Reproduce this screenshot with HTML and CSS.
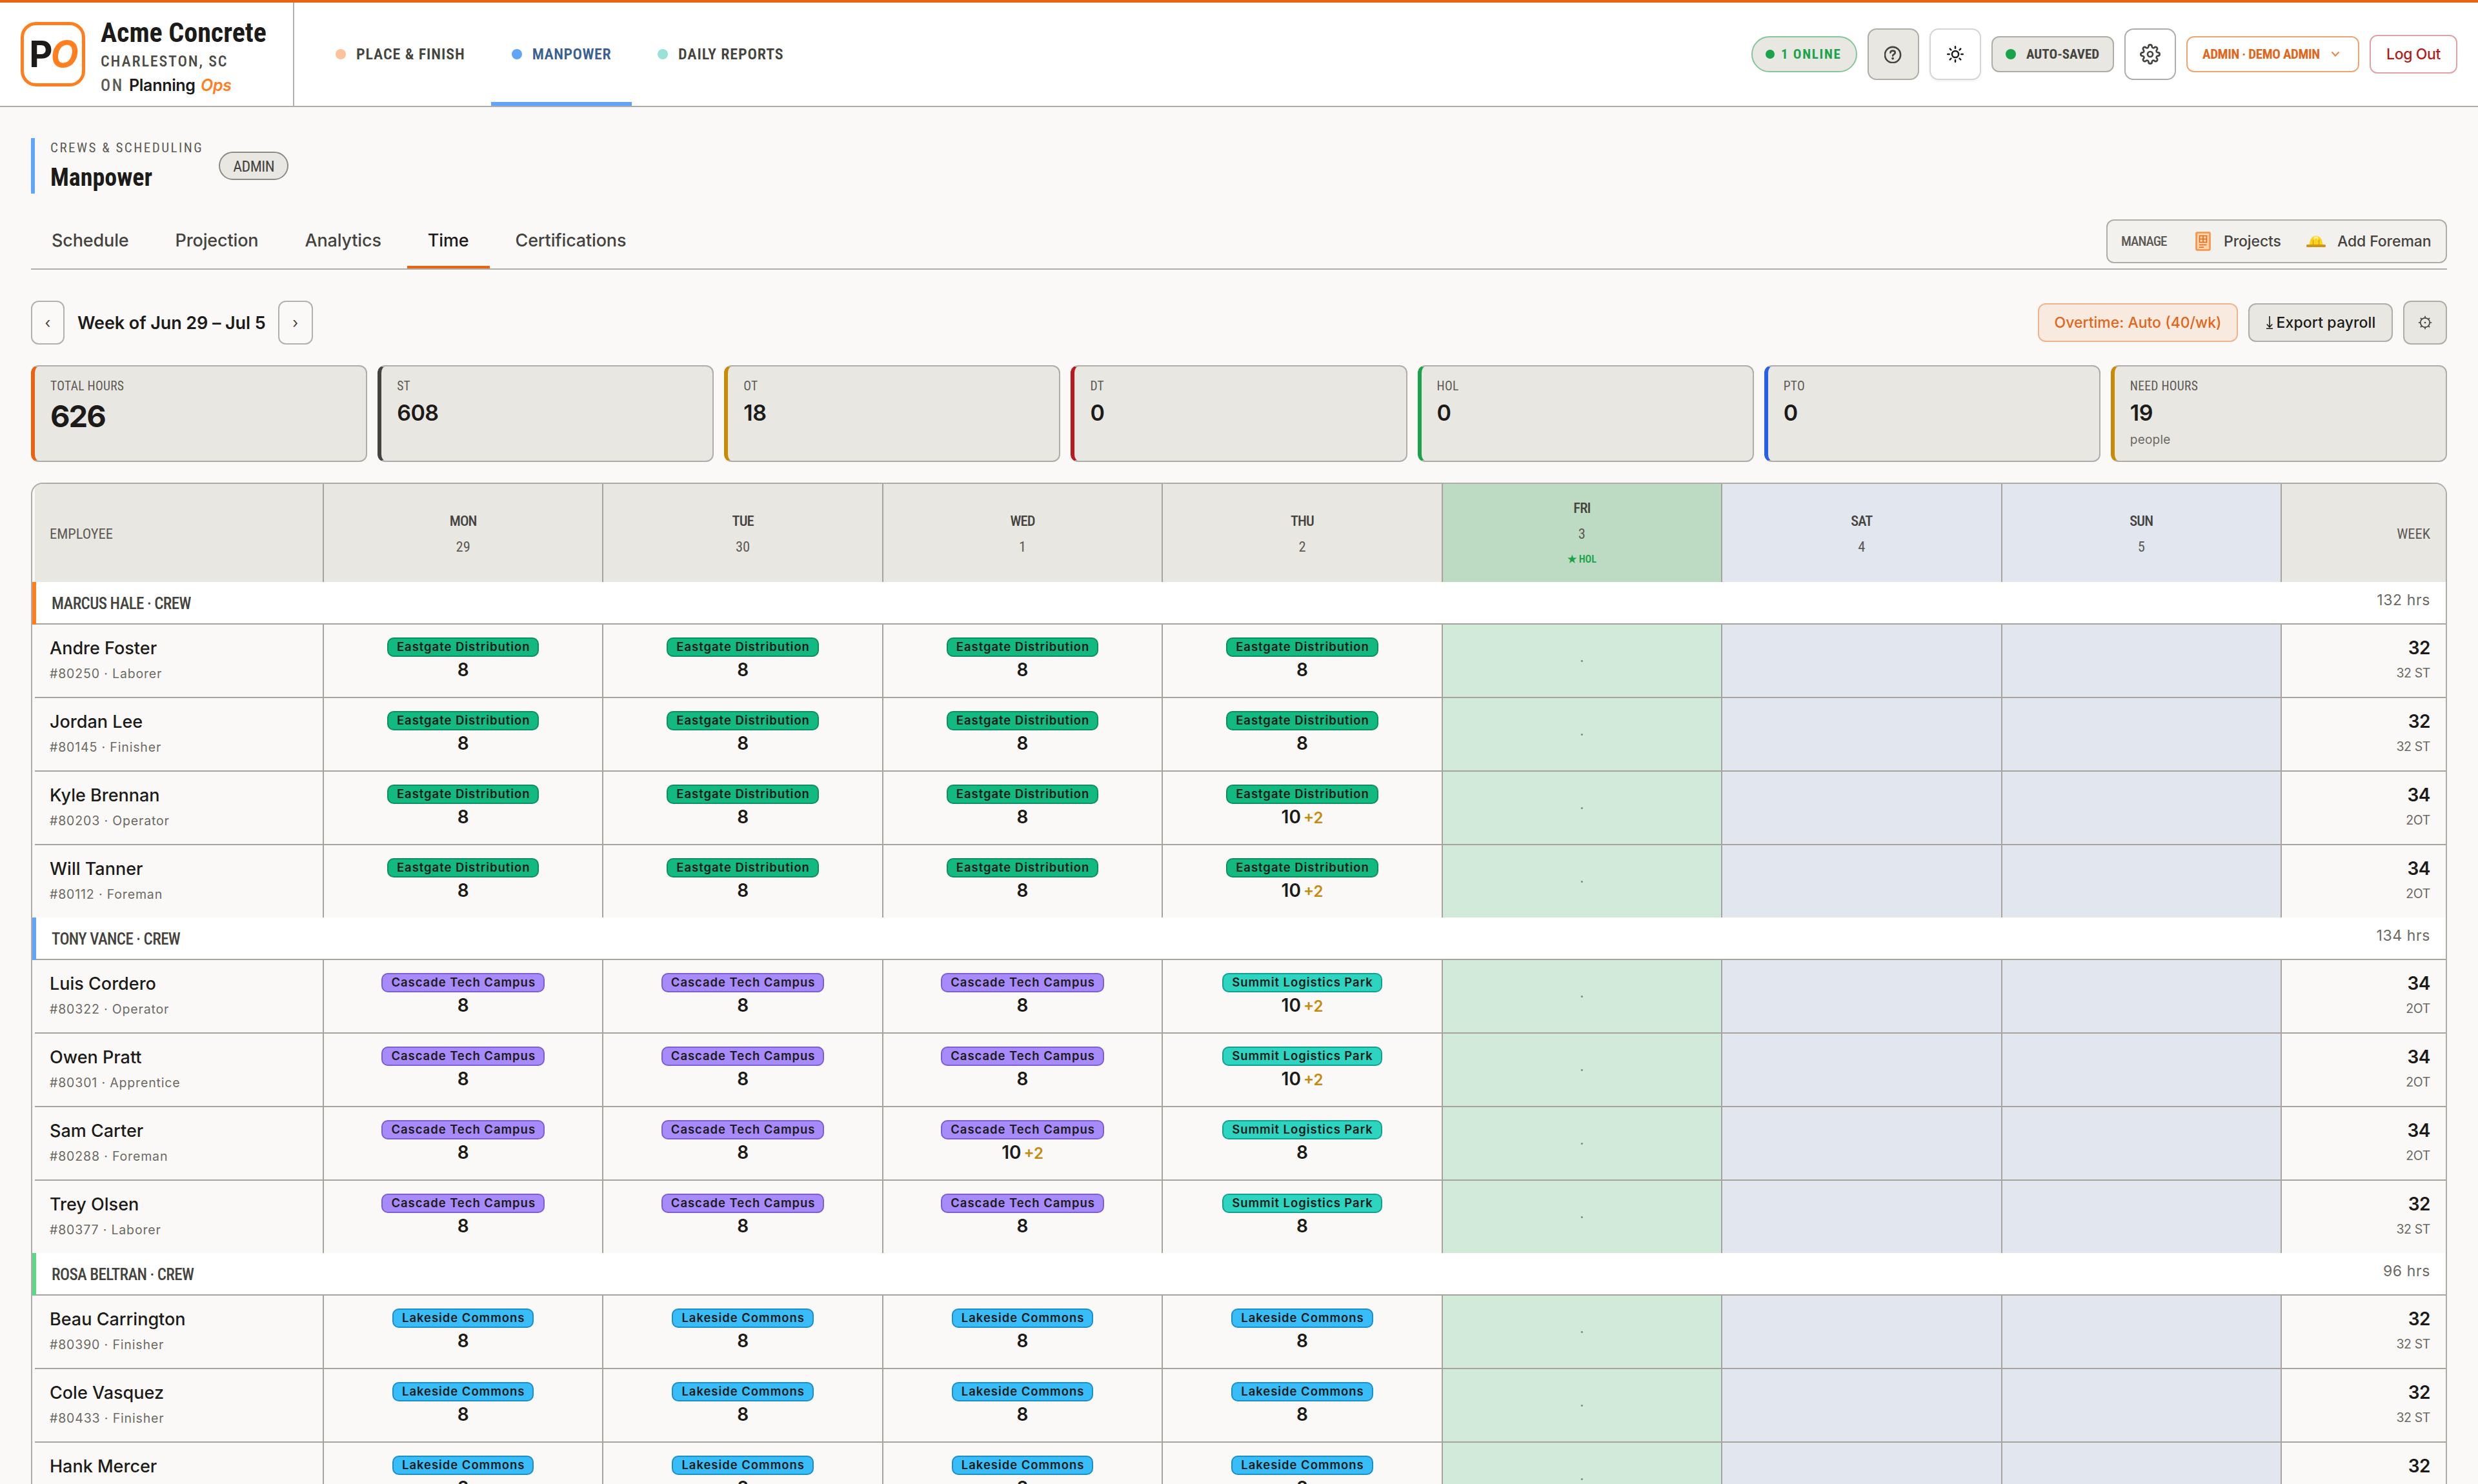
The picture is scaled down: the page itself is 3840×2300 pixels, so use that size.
FILE: index.html
```
<!DOCTYPE html>
<html lang="en">
<head>
    <meta charset="UTF-8">
    <meta name="viewport" content="width=device-width, initial-scale=1.0">
    <title>Manpower - Time</title>
    <link rel="stylesheet" href="styles.css">
</head>
<body>
    <header class="topbar">
        <div class="brand">
            <div class="logo">P<i>O</i></div>
            <div class="brand-text">
                <div class="brand-name">Acme Concrete</div>
                <div class="brand-city">CHARLESTON, SC</div>
                <div class="brand-on">ON <span class="plan">Planning</span> <i>Ops</i></div>
            </div>
        </div>
        <nav class="modules">
            <a class="module"><span class="dot peach"></span><span>PLACE &amp; FINISH</span></a>
            <a class="module active"><span class="dot blue"></span><span>MANPOWER</span></a>
            <a class="module"><span class="dot mint"></span><span>DAILY REPORTS</span></a>
        </nav>
        <div class="actions">
            <div class="online"><span class="dot"></span><span>1 ONLINE</span></div>
            <button class="icon-btn grey">
                <svg width="28" height="28" viewBox="0 0 28 28" fill="none" stroke="#44433e" stroke-width="2.6" stroke-linecap="round"><circle cx="13" cy="15" r="12.1"/><path d="M9.4 11.6c.2-1.9 1.7-3 3.7-3s3.7 1.2 3.7 3.1c0 2.4-3.5 2.500-3.700 4.800"/><circle cx="13.1" cy="20.6" r="1.9" fill="#44433e" stroke="none"/></svg>
            </button>
            <button class="icon-btn soft">
                <svg width="28" height="28" viewBox="0 0 28 28" fill="none" stroke="#1c1b19" stroke-width="2.5" stroke-linecap="round"><circle cx="14" cy="14" r="5.1"/><path d="M14 2.3v2.4M14 23.3v2.4M2.3 14h2.4M23.3 14h2.4M5.7 5.7l1.7 1.7M20.6 20.6l1.7 1.7M5.7 22.3l1.7-1.7M20.6 7.4l1.7-1.7"/></svg>
            </button>
            <div class="saved"><span class="dot"></span><span>AUTO-SAVED</span></div>
            <button class="icon-btn">
                <svg width="32" height="32" viewBox="0 0 24 24" fill="none" stroke="#44433e" stroke-width="2" stroke-linecap="round" stroke-linejoin="round"><circle cx="12" cy="12" r="3"/><path d="M19.4 15a1.65 1.65 0 0 0 .33 1.82l.06.06a2 2 0 0 1 0 2.83 2 2 0 0 1-2.83 0l-.06-.06a1.65 1.65 0 0 0-1.82-.33 1.65 1.65 0 0 0-1 1.51V21a2 2 0 0 1-2 2 2 2 0 0 1-2-2v-.09A1.65 1.65 0 0 0 9 19.4a1.65 1.65 0 0 0-1.82.33l-.06.06a2 2 0 0 1-2.83 0 2 2 0 0 1 0-2.83l.06-.06a1.65 1.65 0 0 0 .33-1.82 1.65 1.65 0 0 0-1.51-1H3a2 2 0 0 1-2-2 2 2 0 0 1 2-2h.09A1.65 1.65 0 0 0 4.6 9a1.65 1.65 0 0 0-.33-1.82l-.06-.06a2 2 0 0 1 0-2.83 2 2 0 0 1 2.83 0l.06.06a1.65 1.65 0 0 0 1.82.33H9a1.65 1.65 0 0 0 1-1.51V3a2 2 0 0 1 2-2 2 2 0 0 1 2 2v.09a1.65 1.65 0 0 0 1 1.51 1.65 1.65 0 0 0 1.82-.33l.06-.06a2 2 0 0 1 2.83 0 2 2 0 0 1 0 2.83l-.06.06a1.65 1.65 0 0 0-.33 1.82V9a1.65 1.65 0 0 0 1.51 1H21a2 2 0 0 1 2 2 2 2 0 0 1-2 2h-.09a1.65 1.65 0 0 0-1.51 1z"/></svg>
            </button>
            <button class="role"><span>ADMIN · DEMO ADMIN</span>
                <svg width="14" height="10" viewBox="0 0 14 10" fill="none" stroke="#e8873f" stroke-width="2"><path d="M1.5 1.5l5.5 6 5.500-6"/></svg>
            </button>
            <button class="logout">Log Out</button>
        </div>
    </header>

    <main class="page">
        <div class="page-head">
            <div class="page-title">
                <div class="eyebrow">CREWS &amp; SCHEDULING</div>
                <h1>Manpower</h1>
            </div>
            <span class="badge">ADMIN</span>
        </div>

        <div class="tabs-row">
            <nav class="tabs">
                <a class="tab">Schedule</a>
                <a class="tab">Projection</a>
                <a class="tab">Analytics</a>
                <a class="tab active">Time</a>
                <a class="tab">Certifications</a>
            </nav>
            <div class="manage">
                <span class="manage-label">MANAGE</span>
                <a class="manage-link">
                    <svg width="24" height="30" viewBox="0 0 24 30"><rect x="1.5" y="1.5" width="21" height="27" rx="1.5" fill="#fdd3a8" stroke="#f5924a" stroke-width="2.6"/><path d="M6.5 6.500h11v10h-11zM12 6.500v10M6.500 11.500h11M6 20.500h11.500M6 24.200h7" fill="none" stroke="#e06a1c" stroke-width="1.6"/></svg>
                    <span>Projects</span>
                </a>
                <a class="manage-link hat">
                    <svg width="30" height="20" viewBox="0 0 30 20"><path d="M5 15C5 7 9 1.5 15 1.5S25 7 25 15z" fill="#fbd31c"/><path d="M12 2.500h6l1 5-2 1V6h-4v2.500l-2-1z" fill="#fdea80"/><path d="M10.5 7.500V15M19.500 7.500V15" stroke="#d9a010" stroke-width="1.4"/><rect x="0" y="15" width="30" height="4" rx="1.5" fill="#cf9512"/></svg>
                    <span>Add Foreman</span>
                </a>
            </div>
        </div>

        <div class="week-row">
            <button class="week-btn">‹</button>
            <span class="week-label">Week of Jun 29 – Jul 5</span>
            <button class="week-btn next">›</button>
            <div class="week-actions">
                <button class="btn overtime">Overtime: Auto (40/wk)</button>
                <button class="btn export">
                    <svg width="12" height="22" viewBox="0 0 12 22" fill="none" stroke="#1c1b19" stroke-width="1.6"><path d="M6 1v17M1.8 13.500L6 18l4.200-4.500M1 20.200h10"/></svg>
                    <span>Export payroll</span>
                </button>
                <button class="btn gear">
                    <svg width="22" height="22" viewBox="0 0 22 22" fill="none" stroke="#44433e" stroke-width="1.7"><circle cx="11" cy="11" r="7.2"/><path d="M11 .8v3M11 18.200v3M.8 11h3M18.200 11h3M3.900 3.900l2 2M16.100 16.100l2 2M3.900 18.100l2-2M16.100 5.900l2-2"/><circle cx="11" cy="11" r="1.3" fill="#44433e" stroke="none"/></svg>
                </button>
            </div>
        </div>

        <div class="stats">
            <div class="stat total"><div class="stat-label">TOTAL HOURS</div><div class="stat-value">626</div></div>
            <div class="stat st"><div class="stat-label">ST</div><div class="stat-value">608</div></div>
            <div class="stat ot"><div class="stat-label">OT</div><div class="stat-value">18</div></div>
            <div class="stat dt"><div class="stat-label">DT</div><div class="stat-value">0</div></div>
            <div class="stat hol"><div class="stat-label">HOL</div><div class="stat-value">0</div></div>
            <div class="stat pto"><div class="stat-label">PTO</div><div class="stat-value">0</div></div>
            <div class="stat ot"><div class="stat-label">NEED HOURS</div><div class="stat-value">19</div><div class="stat-note">people</div></div>
        </div>

        <div class="sheet" id="sheet">
            <div class="row head">
                <div class="cell emp">EMPLOYEE</div>
                <div class="cell day"><b>MON</b><span>29</span></div>
                <div class="cell day"><b>TUE</b><span>30</span></div>
                <div class="cell day"><b>WED</b><span>1</span></div>
                <div class="cell day"><b>THU</b><span>2</span></div>
                <div class="cell day holiday"><b>FRI</b><span>3</span><em>★ HOL</em></div>
                <div class="cell day weekend"><b>SAT</b><span>4</span></div>
                <div class="cell day weekend"><b>SUN</b><span>5</span></div>
                <div class="cell total">WEEK</div>
            </div>
        </div>
    </main>
    <script src="script.js"></script>
</body>
</html>
```
FILE: styles.css
```
* {
    box-sizing: border-box;
}
html, body {
    height: 2300px;
    overflow: hidden;
}
body {
    margin: 0;
    background-color: #faf9f7;
    color: #1c1b19;
    font-family: Inter, 'Liberation Sans', sans-serif;
    font-size: 23px;
}
button {
    font-family: inherit;
    font-size: inherit;
    color: inherit;
    background: none;
    margin: 0;
    padding: 0;
}
.dot {
    width: 16px;
    height: 16px;
    border-radius: 50%;
    background-color: #1aa34a;
}

/* top bar */
.topbar {
    display: flex;
    height: 166px;
    border-top: 4px solid #e86412;
    border-bottom: 2px solid #aeada7;
    background-color: #ffffff;
}
.brand {
    display: flex;
    align-items: center;
    gap: 24px;
    width: 456px;
    padding-left: 32px;
    border-right: 2px solid #b2b1ab;
}
.brand-text {
    padding-top: 8px;
}
.logo {
    display: flex;
    align-items: center;
    justify-content: center;
    width: 100px;
    height: 100px;
    border: 5px solid #ff7f1f;
    border-radius: 24px;
    font-size: 56px;
    font-weight: 700;
    letter-spacing: -3px;
}
.logo i, .brand-on i {
    color: #ff7f1f;
}
.brand-name, .brand-city, .brand-on, .module, .online, .saved, .role, .eyebrow, .page-title h1, .badge, .manage-label, .stat-label, .head, .crew-name {
    font-family: 'Roboto Condensed', Roboto, sans-serif;
}
.brand-name {
    font-size: 42px;
    font-weight: 700;
    line-height: 50px;
}
.brand-city {
    font-size: 24px;
    font-weight: 500;
    line-height: 38px;
    color: #4b4a45;
    letter-spacing: 1.9px;
}
.brand-on {
    font-size: 25px;
    font-weight: 500;
    line-height: 36px;
    color: #5c5a54;
    letter-spacing: 2.6px;
}
.brand-on i, .plan {
    font-family: Inter, sans-serif;
    font-weight: 600;
    letter-spacing: -0.3px;
}
.plan {
    color: #1c1b19;
}
.modules {
    display: flex;
    gap: 8px;
    padding-left: 32px;
}
.module {
    display: flex;
    align-items: center;
    gap: 16px;
    padding: 6px 32px 0;
    border-bottom: 6px solid transparent;
    font-size: 24px;
    font-weight: 600;
    color: #44433e;
    letter-spacing: 0.9px;
}
.module.active {
    color: #3b5f92;
    border-bottom-color: #60a5fa;
    letter-spacing: 0.5px;
}
.peach {
    background-color: #fcc39a;
}
.blue {
    background-color: #60a5fa;
}
.mint {
    background-color: #9ae1d8;
}
.actions {
    display: flex;
    align-items: center;
    gap: 16px;
    margin-left: auto;
    padding-right: 32px;
}
.online, .saved, .role {
    display: flex;
    align-items: center;
    height: 56px;
    border: 2px solid #aeada7;
    border-radius: 12px;
    background-color: #e8e7e2;
    font-size: 21px;
    font-weight: 700;
    color: #44433e;
}
.online {
    gap: 10px;
    width: 164px;
    padding-left: 20px;
    border-color: #86c69b;
    border-radius: 28px;
    color: #1aa34a;
    letter-spacing: 1.7px;
}
.online .dot {
    width: 14px;
    height: 14px;
}
.saved {
    gap: 16px;
    width: 190px;
    padding-left: 20px;
}
.role {
    justify-content: space-between;
    width: 268px;
    padding: 0 28px 0 23px;
    border-color: #eda672;
    background-color: #ffffff;
    color: #e0661c;
    letter-spacing: -0.4px;
}
.icon-btn {
    display: flex;
    align-items: center;
    justify-content: center;
    width: 80px;
    height: 80px;
    border: 2px solid #aeada7;
    border-radius: 14px;
}
.grey {
    background-color: #e8e7e2;
}
.soft {
    border-color: #d6d5d3;
    box-shadow: 0 2px 4px rgba(0, 0, 0, 0.06);
}
.logout {
    width: 136px;
    height: 60px;
    border: 2px solid #e0a3a5;
    border-radius: 12px;
    font-weight: 500;
    color: #b01c1c;
    letter-spacing: -0.4px;
}

/* page head and tabs */
.page {
    padding: 48px 48px 0;
}
.page-head {
    display: flex;
    align-items: center;
    gap: 24px;
}
.page-title {
    height: 86px;
    padding-left: 24px;
    border-left: 6px solid #60a5fa;
}
.eyebrow {
    margin-top: 2px;
    font-size: 21px;
    line-height: 26px;
    color: #5c5a54;
    letter-spacing: 2.5px;
}
.page-title h1 {
    margin: 10px 0 0;
    font-size: 38px;
    font-weight: 700;
    line-height: 46px;
}
.badge {
    width: 108px;
    height: 44px;
    border: 2px solid #8b8a83;
    border-radius: 22px;
    background-color: #e8e7e2;
    font-size: 24px;
    line-height: 42px;
    text-align: center;
    color: #44433e;
    letter-spacing: -0.6px;
}
.tabs-row {
    display: flex;
    justify-content: space-between;
    align-items: flex-start;
    height: 78px;
    margin-top: 40px;
    border-bottom: 2px solid #aeada7;
}
.tabs {
    display: flex;
    gap: 8px;
}
.tab {
    height: 76px;
    padding: 0 32px;
    border-bottom: 4px solid transparent;
    font-size: 27px;
    line-height: 66px;
    font-weight: 500;
    color: #44433e;
    letter-spacing: -0.15px;
}
.tab.active {
    color: #1c1b19;
    border-bottom-color: #e86412;
}
.manage {
    display: flex;
    align-items: center;
    width: 528px;
    height: 68px;
    padding-left: 21px;
    border: 2px solid #aeada7;
    border-radius: 12px;
    background-color: #f2f1ed;
    color: #44433e;
    font-weight: 500;
}
.manage-label {
    width: 115px;
    font-size: 21px;
    color: #5c5a54;
    letter-spacing: -1px;
}
.manage-link {
    display: flex;
    align-items: center;
    gap: 20px;
    letter-spacing: -0.1px;
}
.manage-link.hat {
    gap: 18px;
    margin-left: 39px;
}

/* week picker */
.week-row {
    display: flex;
    align-items: center;
    height: 68px;
    margin-top: 48px;
}
.week-btn {
    width: 52px;
    height: 68px;
    border: 2px solid #b2b1ab;
    border-radius: 12px;
    color: #44433e;
}
.week-btn.next {
    width: 54px;
    margin-left: 19px;
}
.week-label {
    margin-left: 20px;
    font-size: 27px;
    font-weight: 600;
    letter-spacing: -0.1px;
}
.week-actions {
    display: flex;
    align-items: center;
    gap: 16px;
    margin-left: auto;
}
.btn {
    display: flex;
    align-items: center;
    justify-content: center;
    height: 60px;
    border: 2px solid #aeada7;
    border-radius: 12px;
    background-color: #e8e7e2;
    font-weight: 500;
}
.overtime {
    width: 310px;
    border-color: #efb48b;
    background-color: #f9eadf;
    color: #e0661c;
}
.export {
    gap: 5px;
    width: 224px;
    letter-spacing: 0.1px;
}
.gear {
    width: 68px;
    height: 68px;
}

/* totals */
.stats {
    display: grid;
    grid-template-columns: repeat(7, 1fr);
    gap: 16px;
    margin-top: 32px;
}
.stat {
    height: 150px;
    padding: 18px 24px 0;
    border: 2px solid #aeada7;
    border-left-width: 6px;
    border-radius: 12px;
    background-color: #e8e7e2;
}
.stat.total { border-left-color: #e86412; }
.stat.st { border-left-color: #44433e; }
.stat.ot { border-left-color: #c98b06; }
.stat.dt { border-left-color: #b9181d; }
.stat.hol { border-left-color: #1aa34a; }
.stat.pto { border-left-color: #2660e8; }
.stat-label {
    font-size: 19.5px;
    line-height: 26px;
    color: #5c5a54;
    letter-spacing: 0.3px;
}
.stat-value {
    margin-top: 6px;
    font-size: 34px;
    font-weight: 600;
    line-height: 44px;
    letter-spacing: -0.5px;
}
.total .stat-value {
    margin-top: 4px;
    font-size: 47px;
    font-weight: 700;
    line-height: 58px;
    letter-spacing: -2px;
}
.stat-note {
    margin-top: 7px;
    font-size: 19px;
    line-height: 26px;
    color: #6b6963;
    letter-spacing: 0.2px;
}

/* time sheet */
.sheet {
    height: 1700px;
    margin-top: 32px;
    border: 2px solid #aeada7;
    border-radius: 18px;
    overflow: hidden;
}
.row {
    display: grid;
    grid-template-columns: 448px repeat(7, 1fr) 254px;
    height: 114px;
    margin-left: 4px;
    border-bottom: 2px solid #a6a49d;
}
.row.head {
    height: 152px;
    border-bottom: 0;
    background-color: #e8e7e2;
    font-size: 22.5px;
    color: #5c5a54;
}
.row.last {
    height: 112px;
    border-bottom: 0;
}
.cell {
    display: flex;
    flex-direction: column;
    border-right: 2px solid #a6a49d;
}
.emp {
    padding-left: 23px;
}
.cell.total {
    align-items: flex-end;
    padding-right: 24px;
    border-right: 0;
}
.day {
    align-items: center;
}
.head .cell {
    justify-content: center;
    padding-top: 1px;
    line-height: 40px;
}
.head b {
    font-weight: 500;
    color: #44433e;
    letter-spacing: -0.9px;
}
.head em {
    font-size: 16px;
    font-style: normal;
    font-weight: 600;
    color: #1aa34a;
}
.weekend {
    background-color: #e1e6ef;
}
.holiday {
    justify-content: center;
    background-color: #d1ead9;
    color: #7c8d80;
}
.head .holiday {
    background-color: #bddac2;
    color: #5c5a54;
}
.crew {
    display: flex;
    justify-content: space-between;
    height: 66px;
    padding: 0 24px;
    border-left: 6px solid;
    background:
        linear-gradient(#a6a49d, #a6a49d) left bottom / 100% 2px no-repeat,
        #ffffff;
}
.crew-name {
    font-size: 25px;
    font-weight: 500;
    line-height: 68px;
    color: #44433e;
    letter-spacing: -0.6px;
}
.crew-hours {
    line-height: 57px;
    color: #6b6963;
    letter-spacing: 0.6px;
}
.name {
    margin-top: 19px;
    font-size: 27px;
    font-weight: 500;
    line-height: 36px;
}
.sub {
    margin-top: 8px;
    font-size: 19.5px;
    line-height: 26px;
    color: #6b6963;
    letter-spacing: 0.85px;
}
.total .sub {
    letter-spacing: -0.4px;
}
.chip {
    height: 30px;
    margin-top: 20px;
    padding: 0 12px 0 13px;
    border: 2px solid;
    border-radius: 10px;
    font-size: 18.5px;
    font-weight: 600;
    line-height: 24px;
    letter-spacing: 0.95px;
}
.chip.eastgate {
    background-color: #12b981;
    border-color: #0d8f63;
}
.chip.cascade {
    background-color: #a78bfa;
    border-color: #7c5fd3;
}
.chip.summit {
    background-color: #2dd4bf;
    border-color: #14a08f;
}
.chip.lakeside {
    background-color: #38bdf8;
    border-color: #1c8fc9;
}
.hours {
    margin-top: 2px;
    font-size: 28px;
    font-weight: 600;
    line-height: 36px;
}
.extra {
    margin-left: -3px;
    font-size: 24px;
    color: #c58a0f;
}
.week-hours {
    margin-top: 18px;
    font-size: 28px;
    font-weight: 600;
    line-height: 36px;
    letter-spacing: -0.5px;
}
```
FILE: script.js
```
const crews = [
    { name: 'MARCUS HALE', hours: 132, color: '#ff7f1f', jobs: ['eastgate', 'eastgate', 'eastgate', 'eastgate'], people: [
        ['Andre Foster', '#80250 · Laborer', [8, 8, 8, 8], 32, '32 ST'],
        ['Jordan Lee', '#80145 · Finisher', [8, 8, 8, 8], 32, '32 ST'],
        ['Kyle Brennan', '#80203 · Operator', [8, 8, 8, 10], 34, '2OT'],
        ['Will Tanner', '#80112 · Foreman', [8, 8, 8, 10], 34, '2OT']
    ] },
    { name: 'TONY VANCE', hours: 134, color: '#60a5fa', jobs: ['cascade', 'cascade', 'cascade', 'summit'], people: [
        ['Luis Cordero', '#80322 · Operator', [8, 8, 8, 10], 34, '2OT'],
        ['Owen Pratt', '#80301 · Apprentice', [8, 8, 8, 10], 34, '2OT'],
        ['Sam Carter', '#80288 · Foreman', [8, 8, 10, 8], 34, '2OT'],
        ['Trey Olsen', '#80377 · Laborer', [8, 8, 8, 8], 32, '32 ST']
    ] },
    { name: 'ROSA BELTRAN', hours: 96, color: '#5dd68a', jobs: ['lakeside', 'lakeside', 'lakeside', 'lakeside'], people: [
        ['Beau Carrington', '#80390 · Finisher', [8, 8, 8, 8], 32, '32 ST'],
        ['Cole Vasquez', '#80433 · Finisher', [8, 8, 8, 8], 32, '32 ST'],
        ['Hank Mercer', '#80418 · Laborer', [8, 8, 8, 8], 32, '32 ST']
    ] }
];

const jobNames = {
    eastgate: 'Eastgate Distribution',
    cascade: 'Cascade Tech Campus',
    summit: 'Summit Logistics Park',
    lakeside: 'Lakeside Commons'
};

let html = '';
crews.forEach(crew => {
    html += `<div class="crew" style="border-left-color: ${crew.color}"><span class="crew-name">${crew.name} · CREW</span><span class="crew-hours">${crew.hours} hrs</span></div>`;
    crew.people.forEach(([name, sub, hours, total, split], i) => {
        const last = i === 3 ? ' last' : '';
        html += `<div class="row${last}"><div class="cell emp"><div class="name">${name}</div><div class="sub">${sub}</div></div>`;
        hours.forEach((h, d) => {
            const extra = h > 8 ? ` <span class="extra">+${h - 8}</span>` : '';
            html += `<div class="cell day"><div class="chip ${crew.jobs[d]}">${jobNames[crew.jobs[d]]}</div><div class="hours">${h}${extra}</div></div>`;
        });
        html += '<div class="cell day holiday">·</div><div class="cell weekend"></div><div class="cell weekend"></div>';
        html += `<div class="cell total"><div class="week-hours">${total}</div><div class="sub">${split}</div></div></div>`;
    });
});
document.getElementById('sheet').insertAdjacentHTML('beforeend', html);
```
